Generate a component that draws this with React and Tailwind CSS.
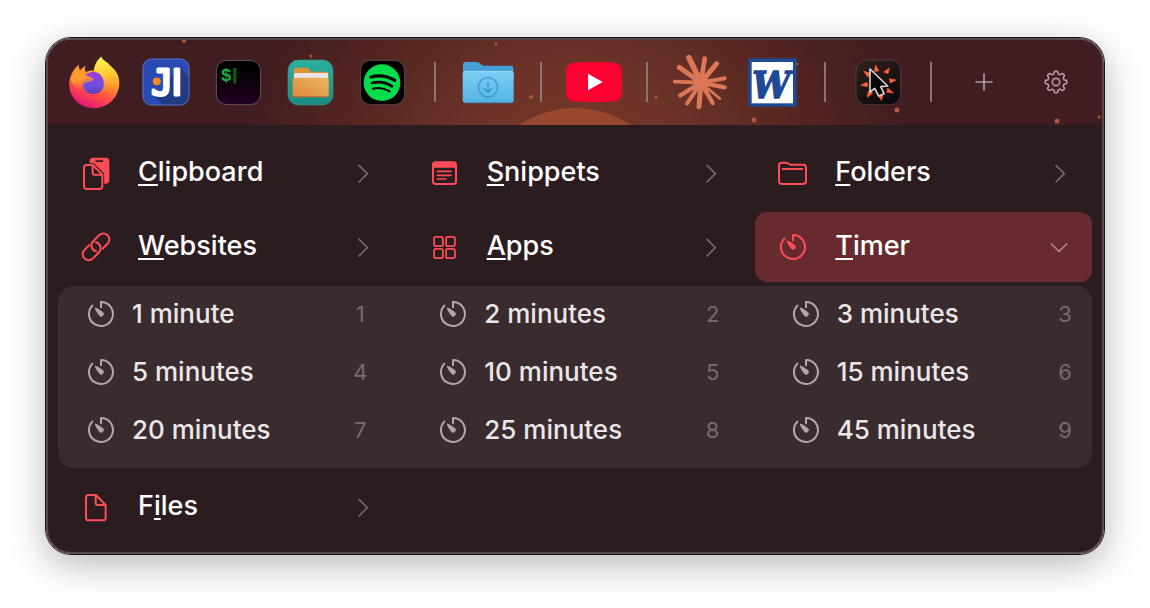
import React from "react";

function Firefox() {
  return (
    <svg viewBox="114 90 156 159" className="h-[53px] w-[52px]" aria-hidden="true">
      <defs>
        <linearGradient id="ffBody" x1="0.75" y1="0" x2="0.3" y2="1">
          <stop offset="0.1" stopColor="#ffd83d" />
          <stop offset="0.4" stopColor="#ff9a2c" />
          <stop offset="0.7" stopColor="#ff4a46" />
          <stop offset="1" stopColor="#e3127c" />
        </linearGradient>
        <linearGradient id="ffGlobe" x1="0.4" y1="0" x2="0.4" y2="1">
          <stop offset="0" stopColor="#a03be0" />
          <stop offset="0.6" stopColor="#6f4fe0" />
          <stop offset="1" stopColor="#5a3fc0" />
        </linearGradient>
        <linearGradient id="ffFlame" x1="0.4" y1="0" x2="0.6" y2="1">
          <stop offset="0" stopColor="#fff04a" />
          <stop offset="0.45" stopColor="#ffd035" />
          <stop offset="1" stopColor="#ff9a2c" stopOpacity="0" />
        </linearGradient>
        <linearGradient id="ffHead" x1="0.3" y1="0" x2="0.5" y2="1">
          <stop offset="0" stopColor="#ff9330" />
          <stop offset="0.5" stopColor="#ffa02c" />
          <stop offset="1" stopColor="#ff5a40" stopOpacity="0" />
        </linearGradient>
      </defs>
      <path
        d="M147 116C136 124 121 142 118 165C113 212 148 246 192 246C236 246 268 212 268 170C268 154 262 142 254 132C252 128 240 120 234 112C224 104 215 99 214 92C200 103 195 116 192 134C180 132 172 134 168 140C164 134 164 128 166 121C158 125 154 130 150 134C147 128 146 122 147 116Z"
        fill="url(#ffBody)"
      />
      <circle cx="190" cy="171" r="33" fill="url(#ffGlobe)" />
      <path
        d="M214 92C200 103 194 116 192 134C208 138 219 150 221 168C222 182 219 192 212 200C236 198 258 184 264 152C258 134 244 124 234 112C224 104 215 99 214 92Z"
        fill="url(#ffFlame)"
      />
      <path
        d="M147 116C140 124 128 138 122 160C128 180 144 196 164 200C160 192 157 182 160 176C168 166 184 170 192 159C184 154 174 150 169 149C166 146 166 142 168 140C164 134 164 128 166 121C158 125 154 130 150 134C147 128 146 122 147 116Z"
        fill="url(#ffHead)"
      />
    </svg>
  );
}

function IdeLogo() {
  return (
    <svg viewBox="0 0 146 146" className="h-12 w-12" aria-hidden="true">
      <defs>
        <clipPath id="ideClip">
          <rect x="2" y="2" width="142" height="142" rx="27" />
        </clipPath>
      </defs>
      <g clipPath="url(#ideClip)">
        <rect width="146" height="146" fill="#2a4bb3" />
        <path d="M114 28L146 60V146H68L30 110L60 110L84 60Z" fill="#213a84" />
      </g>
      <rect x="3" y="3" width="140" height="140" rx="26" fill="none" stroke="#5b6fb4" strokeWidth="3" />
      <g fill="#fff" stroke="#fff" strokeWidth="9" strokeLinejoin="round">
        <text x="28" y="112" fontSize="110" fontFamily="DejaVu Sans Mono, monospace">J</text>
        <text x="90" y="112" fontSize="110" fontFamily="DejaVu Sans, sans-serif">I</text>
      </g>
      <circle cx="45" cy="71" r="12" fill="#ff8a1f" />
    </svg>
  );
}

function Terminal() {
  return (
    <svg viewBox="0 0 141 141" className="size-[47px]" aria-hidden="true">
      <defs>
        <linearGradient id="term" x1="0" y1="0" x2="0" y2="1">
          <stop offset="0.2" stopColor="#020102" />
          <stop offset="1" stopColor="#21001f" />
        </linearGradient>
      </defs>
      <rect x="4" y="4" width="133" height="133" rx="31" fill="url(#term)" stroke="#655457" strokeWidth="3" />
      <text x="17" y="67" fontSize="54" fontWeight="700" fill="#12b33d" fontFamily="Liberation Mono, monospace">$</text>
      <rect x="55" y="27" width="9" height="46" fill="#0b5a22" />
    </svg>
  );
}

function FileManager() {
  return (
    <svg viewBox="0 0 141 141" className="size-[47px]" aria-hidden="true">
      <defs>
        <linearGradient id="fmBg" x1="0" y1="0" x2="0" y2="1">
          <stop offset="0" stopColor="#2bb09e" />
          <stop offset="1" stopColor="#1b8c80" />
        </linearGradient>
        <linearGradient id="fmFront" x1="0" y1="1" x2="1" y2="0">
          <stop offset="0" stopColor="#de8840" />
          <stop offset="1" stopColor="#e8b95f" />
        </linearGradient>
      </defs>
      <rect x="3" y="3" width="135" height="135" rx="32" fill="url(#fmBg)" stroke="#3f8f86" strokeWidth="2" />
      <path d="M20 110V32Q20 26 26 26H60Q64 26 67 31L71 38H118Q124 38 124 44V110Z" fill="#dd913a" />
      <rect x="21" y="42" width="102" height="20" rx="3" fill="#e9e4e4" />
      <rect x="17" y="62" width="108" height="53" rx="2" fill="#c4632f" />
      <rect x="17" y="56" width="108" height="56" rx="3" fill="url(#fmFront)" />
    </svg>
  );
}

function Music() {
  return (
    <svg viewBox="0 0 141 141" className="size-[47px]" aria-hidden="true">
      <rect x="4" y="4" width="133" height="133" rx="31" fill="#000" stroke="#5a494c" strokeWidth="3" />
      <circle cx="69" cy="71" r="55" fill="#00dc4b" />
      <g fill="none" stroke="#000" strokeLinecap="round">
        <path d="M36 54Q74 44 107 64" strokeWidth="10" />
        <path d="M39 72Q72 64 99 82" strokeWidth="8" />
        <path d="M42 89Q68 82 92 97" strokeWidth="6" />
      </g>
    </svg>
  );
}

function Downloads() {
  return (
    <svg viewBox="0 0 156 129" className="h-[43px] w-[52px]" aria-hidden="true">
      <defs>
        <linearGradient id="dlFront" x1="0" y1="0" x2="0" y2="1">
          <stop offset="0" stopColor="#7bd0f5" />
          <stop offset="1" stopColor="#54b2e4" />
        </linearGradient>
      </defs>
      <path d="M3 60V10Q3 3 10 3H44Q49 3 53 7L60 12Q62 14 66 14H147Q154 14 154 21V60Z" fill="#44a1d5" />
      <path d="M2 38Q2 30 10 30H147Q155 30 155 38V118Q155 125 148 125H9Q2 125 2 118Z" fill="url(#dlFront)" />
      <path d="M6 31H151" stroke="#a0e0fa" strokeWidth="2" />
      <path d="M6 125H151" stroke="#3b93c4" strokeWidth="3" />
      <g fill="none" stroke="#3f97c8" strokeWidth="4" strokeLinecap="round" strokeLinejoin="round">
        <circle cx="78" cy="79" r="29" />
        <path d="M78 64V93M67 83L78 94L89 83" />
      </g>
    </svg>
  );
}

function Video() {
  return (
    <svg viewBox="0 0 168 120" className="h-10 w-14" aria-hidden="true">
      <path d="M84 0C120 0 142 1 150 3C159 5 164 11 166 20C169 46 169 74 166 100C164 109 159 115 150 117C142 119 120 120 84 120C48 120 26 119 18 117C9 115 4 109 2 100C-1 74 -1 46 2 20C4 11 9 5 18 3C26 1 48 0 84 0Z" fill="#ff0033" />
      <path d="M66 35L110 60L66 85Z" fill="#fff" />
    </svg>
  );
}

const burst = [
  [537, 98, 17], [584, 101, 14], [620, 116, 15], [644, 160, 12], [644, 187, 13], [630, 221, 8],
  [608, 234, 13], [567, 245, 15], [531, 236, 12], [511, 211, 13], [494, 170, 11], [508, 127, 15],
];

function Burst() {
  return (
    <svg viewBox="486 87 168 168" className="size-14" aria-hidden="true">
      <g stroke="#db7656" strokeLinecap="round">
        {burst.map(([x, y, w]) => (
          <line key={x + y} x1="573" y1="173" x2={x} y2={y} strokeWidth={w} />
        ))}
      </g>
      <circle cx="573" cy="173" r="24" fill="#db7656" />
    </svg>
  );
}

function Word() {
  return (
    <svg viewBox="0 0 147 147" className="size-[49px]" aria-hidden="true">
      <rect x="1" y="1" width="145" height="145" fill="#1d4a93" />
      <rect x="11" y="12" width="124" height="124" fill="#fff" />
      <text x="13" y="119" fontSize="113" fontWeight="700" fontStyle="italic" fill="#1d4a93" stroke="#1d4a93" strokeWidth="4" fontFamily="DejaVu Serif Condensed, DejaVu Serif, serif">W</text>
    </svg>
  );
}

function Pointer() {
  return (
    <svg viewBox="164 100 141 141" className="size-[47px]" aria-hidden="true">
      <defs>
        <linearGradient id="ptr" x1="0" y1="0" x2="0.6" y2="1">
          <stop offset="0" stopColor="#33211f" />
          <stop offset="1" stopColor="#0f0a0b" />
        </linearGradient>
      </defs>
      <rect x="167" y="103" width="134" height="134" rx="31" fill="url(#ptr)" stroke="#5f4b4d" strokeWidth="2" />
      <g fill="#fb6238" stroke="#fb6238" strokeWidth="2" strokeLinejoin="round">
        <path d="M226 118L235 136L222 137Z" />
        <path d="M267 127L263 144L250 139Z" />
        <path d="M287 163L270 172L267 159Z" />
        <path d="M279 202L260 200L262 187Z" />
        <path d="M243 224L234 210L248 209Z" />
        <path d="M201 215L204 197L217 202Z" />
        <path d="M181 179L200 170L202 183Z" />
        <path d="M190 137L209 142L203 154Z" />
      </g>
      <path d="M209 130V199L223 188L235 211L251 204L241 183L262 181Z" fill="#080505" stroke="#d8cfcf" strokeWidth="5" strokeLinejoin="round" />
    </svg>
  );
}

function Plus() {
  return (
    <svg viewBox="0 0 54 54" className="size-[18px]" aria-hidden="true">
      <path d="M27 1V53M1 27H53" stroke="#ad9a9c" strokeWidth="5" />
    </svg>
  );
}

const gearPath =
  Array.from({ length: 160 }, (_, i) => {
    const t = (i / 160) * Math.PI * 2;
    const r = 28.5 + 4 * Math.tanh(2.2 * Math.cos(8 * t));
    return `${i ? "L" : "M"}${(36 + r * Math.sin(t)).toFixed(2)} ${(36 - r * Math.cos(t)).toFixed(2)}`;
  }).join("") + "Z";

function Gear() {
  return (
    <svg viewBox="0 0 72 72" className="size-6" aria-hidden="true">
      <g fill="none" stroke="#b09c9e" strokeWidth="5" strokeLinejoin="round">
        <path d={gearPath} />
        <circle cx="36" cy="36" r="11" />
      </g>
    </svg>
  );
}

function TimerIcon() {
  return (
    <svg viewBox="-42 -42 84 84" className="size-7" aria-hidden="true">
      <path d="M0 -20V-36A36 36 0 1 1 -26 -25" fill="none" stroke="currentColor" strokeWidth="6" strokeLinecap="round" strokeLinejoin="round" />
      <path d="M-17 -18Q-12 -17 5 -5A6 6 0 0 1 -4 5Q-17 -12 -17 -18Z" fill="currentColor" stroke="currentColor" strokeWidth="3" strokeLinejoin="round" />
    </svg>
  );
}

function ClipboardIcon() {
  return (
    <svg viewBox="122 76 90 105" className="h-[35px] w-[30px]" aria-hidden="true">
      <rect x="148" y="81" width="59" height="78" rx="10" fill="currentColor" />
      <rect x="165" y="89" width="24" height="5" rx="2" fill="#2b1c1f" />
      <path d="M140 103H158L186 131V166Q186 175 177 175H140Q131 175 131 166V112Q131 103 140 103Z" fill="#2b1c1f" stroke="#2b1c1f" strokeWidth="11" />
      <path d="M140 103H157L186 132V166Q186 175 177 175H140Q131 175 131 166V112Q131 103 140 103ZM157 103V127Q157 132 162 132H186" fill="none" stroke="currentColor" strokeWidth="6" strokeLinejoin="round" />
    </svg>
  );
}

function LinkIcon() {
  return (
    <svg viewBox="124 305 90 90" className="size-[30px]" aria-hidden="true">
      <g transform="translate(169 349.500) rotate(-45)" fill="none" stroke="currentColor" strokeWidth="6" strokeLinecap="round">
        <path d="M-11 -18H-31A18 18 0 0 0 -31 18H-6A18 18 0 0 0 9 -10" />
        <path d="M11 18H31A18 18 0 0 0 31 -18H6A18 18 0 0 0 -9 10" />
      </g>
    </svg>
  );
}

function SnippetsIcon() {
  return (
    <svg viewBox="91 90 81 78" className="h-[26px] w-[27px]" aria-hidden="true">
      <rect x="97" y="97" width="69" height="65" rx="8" fill="none" stroke="currentColor" strokeWidth="6" />
      <path d="M96 113V104Q96 96 105 96H158Q167 96 167 104V113Z" fill="currentColor" />
      <path d="M110 124H151M110 136H151M110 147H136" stroke="currentColor" strokeWidth="5" strokeLinecap="round" />
    </svg>
  );
}

function AppsIcon() {
  return (
    <svg viewBox="97 313 76 77" className="size-[25px]" aria-hidden="true">
      <g fill="none" stroke="currentColor" strokeWidth="5.500">
        <rect x="103" y="319" width="27" height="28" rx="5" />
        <rect x="140" y="319" width="27" height="28" rx="5" />
        <rect x="103" y="356" width="27" height="28" rx="5" />
        <rect x="140" y="356" width="27" height="28" rx="5" />
      </g>
    </svg>
  );
}

function FolderIcon() {
  return (
    <svg viewBox="84 90 90 78" className="h-[26px] w-[30px]" aria-hidden="true">
      <path d="M87 107Q87 98 96 98H107Q112 98 115 101Q118 104 123 104H160Q168 104 168 113V153Q168 162 159 162H96Q87 162 87 153ZM98 117H157" fill="none" stroke="currentColor" strokeWidth="6" strokeLinecap="round" strokeLinejoin="round" />
    </svg>
  );
}

function FileIcon() {
  return (
    <svg viewBox="132 635 75 90" className="h-[30px] w-[25px]" aria-hidden="true">
      <path d="M146 644H168L197 674V712Q197 720 189 720H146Q138 720 138 712V652Q138 644 146 644ZM167 644V668Q167 674 173 674H197" fill="none" stroke="currentColor" strokeWidth="6" strokeLinejoin="round" />
    </svg>
  );
}

function Chevron({ open }) {
  return (
    <svg viewBox="-30 -32 60 60" className="size-5" aria-hidden="true">
      <path
        d={open ? "M-26 -11L-3 11L20 -11" : "M-12 -25L13 0L-12 25"}
        fill="none"
        stroke={open ? "#b08486" : "#75676a"}
        strokeWidth="5"
        strokeLinecap="round"
        strokeLinejoin="round"
      />
    </svg>
  );
}

const toolbar = [
  ["Firefox", Firefox], ["IntelliJ IDEA", IdeLogo], ["Terminal", Terminal],
  ["File manager", FileManager], ["Spotify", Music], null,
  ["Downloads", Downloads], null,
  ["YouTube", Video], null,
  ["Claude", Burst], ["Word", Word], null,
  ["Pointer", Pointer], null,
  ["Add", Plus], ["Settings", Gear],
];

const dots = [
  [184, 41, 2], [311, 56, 1.5], [496, 44, 1.5], [531, 97, 2], [656, 97, 1.5],
  [754, 120, 2.5], [797, 64, 1.5], [897, 110, 2.5], [1057, 121, 2.5], [1099, 117, 1.5],
];

function Backdrop() {
  return (
    <svg viewBox="48 40 1054 85" preserveAspectRatio="xMidYMax slice" className="absolute inset-0 h-full w-full" aria-hidden="true">
      <circle cx="575" cy="209" r="101" fill="#97472d" />
      <g fill="#ad583c">
        {dots.map(([x, y, r]) => (
          <circle key={x} cx={x} cy={y} r={r} />
        ))}
      </g>
    </svg>
  );
}

function Toolbar() {
  return (
    <header className="relative h-[85px] overflow-hidden bg-[#401d20] bg-[radial-gradient(330px_260px_at_50%_130%,#74362a_0%,#6e3429_30%,#572722_65%,#401d20_100%)]">
      <Backdrop />
      <nav className="relative flex h-full items-center px-[10px] pb-px" aria-label="Shortcuts">
        {toolbar.map((entry, i) => {
          if (!entry) {
            return (
              <div key={i} className="flex flex-[34] justify-center" role="separator">
                <div className="h-10 w-[2px] bg-[#8d7273]" />
              </div>
            );
          }
          const [name, Icon] = entry;
          return (
            <button key={i} type="button" aria-label={name} className="flex h-full flex-[72] items-center justify-center">
              <Icon />
            </button>
          );
        })}
      </nav>
    </header>
  );
}

function MenuItem({ icon: Icon, before = "", letter, after, open = false }) {
  return (
    <button
      type="button"
      aria-expanded={open}
      className={
        open
          ? "flex h-[70px] items-center rounded-xl bg-[#672b2f] pr-[22px] text-left"
          : "flex h-[70px] items-center rounded-xl pr-[22px] text-left"
      }
    >
      <span className="flex w-20 justify-center pr-1 text-[#ff4d57]">
        <Icon />
      </span>
      <span className="flex-1 pb-[3px] text-[27px] leading-8 font-medium text-white">
        {before}
        <span className="underline decoration-2 underline-offset-3">{letter}</span>
        {after}
      </span>
      <Chevron open={open} />
    </button>
  );
}

const durations = ["1 minute", "2 minutes", "3 minutes", "5 minutes", "10 minutes", "15 minutes", "20 minutes", "25 minutes", "45 minutes"];

function Durations() {
  return (
    <div className="col-span-3 grid grid-cols-3 gap-x-[72px] rounded-2xl bg-[#392b2e] pr-5 pb-2 pl-[29px]">
      {durations.map((label, i) => (
        <button key={label} type="button" className="flex h-[58px] items-center pb-[3px] text-left">
          <span className="text-[#b5a5a7]">
            <TimerIcon />
          </span>
          <span className="ml-[17px] flex-1 text-[26px] leading-8 font-medium text-[#ebe7e8]">{label}</span>
          <kbd className="w-[14px] text-center font-[Inter,sans-serif] text-[22px] leading-8 text-[#786b6e]">{i + 1}</kbd>
        </button>
      ))}
    </div>
  );
}

export default function App() {
  return (
    <div className="min-h-screen bg-white px-[45px] pt-[37px] pb-[53px] font-[Inter,sans-serif]">
      <div className="rounded-[26px] border border-[#1d1516] shadow-[0_10px_36px_rgba(0,0,0,0.28)]">
        <div className="overflow-hidden rounded-[25px] border-2 border-[#5a484b] bg-[#2b1c1f]">
          <Toolbar />
          <main className="grid grid-cols-3 gap-x-3 gap-y-1 px-[10px] pt-[13px] pb-[10px]">
            <MenuItem icon={ClipboardIcon} letter="C" after="lipboard" />
            <MenuItem icon={SnippetsIcon} letter="S" after="nippets" />
            <MenuItem icon={FolderIcon} letter="F" after="olders" />
            <MenuItem icon={LinkIcon} letter="W" after="ebsites" />
            <MenuItem icon={AppsIcon} letter="A" after="pps" />
            <MenuItem icon={TimerIcon} letter="T" after="imer" open />
            <Durations />
            <MenuItem icon={FileIcon} before="F" letter="i" after="les" />
          </main>
        </div>
      </div>
    </div>
  );
}
